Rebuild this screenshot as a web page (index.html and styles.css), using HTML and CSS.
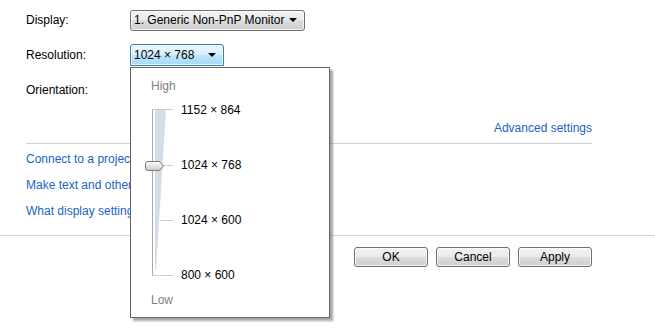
FILE: index.html
```html
<!DOCTYPE html>
<html lang="en">
  <head>
    <meta charset="UTF-8" />
    <meta name="viewport" content="width=device-width, initial-scale=1.0" />
    <title>Screen Resolution</title>
    <link rel="stylesheet" href="styles.css">
  </head>
  <body>
    <div class="content">
      <div class="row">
        <div class="label">Display:</div>
        <div class="select select-display">
          <span>1. Generic Non-PnP Monitor</span>
          <span class="arrow"></span>
        </div>
      </div>

      <div class="row">
        <div class="label">Resolution:</div>
        <div class="select-wrap">
          <div class="select select-open">
            <span>1024 × 768</span>
            <span class="arrow"></span>
          </div>

          <!-- dropdown with the resolution slider -->
          <div class="popup">
            <div class="popup-end">High</div>
            <div class="scale">
              <svg class="slider" width="40" height="181" viewBox="0 0 40 181">
                <defs>
                  <linearGradient id="thumbFill" x1="0" y1="0" x2="0" y2="1">
                    <stop offset="0" stop-color="#fdfdfd" />
                    <stop offset="0.5" stop-color="#e6e6e6" />
                    <stop offset="1" stop-color="#c9c9c9" />
                  </linearGradient>
                </defs>
                <line x1="11.5" y1="7" x2="11.5" y2="174" stroke="#a9a9a9" />
                <line x1="11.5" y1="7.5" x2="32" y2="7.5" stroke="#cfcfcf" />
                <polygon points="14,8 25,8 15,168 14,168" fill="#d5dee7" />
                <line x1="22" y1="63.5" x2="32" y2="63.5" stroke="#cfcfcf" />
                <line x1="19" y1="118.5" x2="32" y2="118.5" stroke="#cfcfcf" />
                <line x1="11.5" y1="173.5" x2="32" y2="173.5" stroke="#cfcfcf" />
                <path d="M6.5,59.5 H18.5 L22.5,64 L18.5,68.5 H6.5 Q4.5,68.5 4.5,66.5 V61.5 Q4.5,59.5 6.5,59.5 Z"
                  fill="url(#thumbFill)" stroke="#7d7d7d" />
              </svg>
              <div class="scale-labels">
                <div>1152 × 864</div>
                <div>1024 × 768</div>
                <div>1024 × 600</div>
                <div>800 × 600</div>
              </div>
            </div>
            <div class="popup-end">Low</div>
          </div>
        </div>
      </div>

      <div class="row">
        <div class="label">Orientation:</div>
      </div>

      <div class="advanced">
        <a href="#" class="link">Advanced settings</a>
      </div>

      <div class="links">
        <a href="#" class="link">Connect to a projector</a>
        <a href="#" class="link">Make text and other items larger or smaller</a>
        <a href="#" class="link">What display settings should I choose?</a>
      </div>
    </div>

    <div class="footer">
      <button class="btn">OK</button>
      <button class="btn">Cancel</button>
      <button class="btn">Apply</button>
    </div>
  </body>
</html>
```

FILE: styles.css
```css
* {
  margin: 0;
  padding: 0;
  box-sizing: border-box;
}

html,
body {
  min-height: 100%;
}

body {
  min-height: 100vh;
  font-family: "Liberation Sans", Arial, sans-serif;
  font-size: 12px;
  line-height: 16px;
  color: #000;
  background: #fff;
}

.content {
  padding: 9px 63px 0 26px;
}

.row {
  display: flex;
  align-items: center;
  height: 22px;
  margin-bottom: 13px;
}

.label {
  width: 104px;
}

.select {
  display: flex;
  align-items: center;
  justify-content: space-between;
  height: 22px;
  padding: 0 7px 0 3px;
  border: 1px solid #707070;
  border-radius: 3px;
  background: linear-gradient(#f2f2f2 0%, #ebebeb 50%, #dddddd 50%, #cfcfcf 100%);
  box-shadow: inset 0 0 0 1px rgba(255, 255, 255, 0.7);
}

.select-display {
  width: 175px;
  height: 21px;
}

.select-wrap {
  position: relative;
}

.select-open {
  width: 94px;
  border-color: #3c7fb1;
  border-radius: 3px 3px 0 0;
  background: linear-gradient(#eaf6fd 0%, #d9f0fc 50%, #bee6fd 50%, #a7d9f5 100%);
}

.arrow {
  width: 0;
  height: 0;
  border-left: 4px solid transparent;
  border-right: 4px solid transparent;
  border-top: 4px solid #000;
}

.popup {
  position: absolute;
  top: 23px;
  left: 0;
  width: 200px;
  height: 251px;
  background: #fff;
  border: 1px solid #646464;
  box-shadow: 3px 3px 2px rgba(0, 0, 0, 0.35);
  padding: 10px 0 0 10px;
  z-index: 2;
}

.popup-end {
  color: #808080;
  margin-left: 10px;
}

.scale {
  display: flex;
  margin: 8px 0 9px;
  height: 181px;
}

.scale-labels {
  display: flex;
  flex-direction: column;
  gap: 39px;
}

.advanced {
  display: flex;
  justify-content: flex-end;
  padding-top: 6px;
  padding-bottom: 7px;
  border-bottom: 1px solid #cfd3d8;
}

.link {
  color: #1a63c6;
  text-decoration: none;
}

.links {
  display: flex;
  flex-direction: column;
  gap: 10px;
  padding-top: 7px;
}

.footer {
  display: flex;
  justify-content: flex-end;
  gap: 8px;
  margin-top: 16px;
  padding: 11px 63px 0 0;
  border-top: 1px solid #d5d5d5;
}

.btn {
  width: 74px;
  height: 20px;
  font-family: inherit;
  font-size: 12px;
  color: #000;
  border: 1px solid #707070;
  border-radius: 3px;
  background: linear-gradient(#f2f2f2 0%, #ebebeb 50%, #dddddd 50%, #cfcfcf 100%);
  box-shadow: inset 0 0 0 1px rgba(255, 255, 255, 0.7);
  cursor: pointer;
}
```
